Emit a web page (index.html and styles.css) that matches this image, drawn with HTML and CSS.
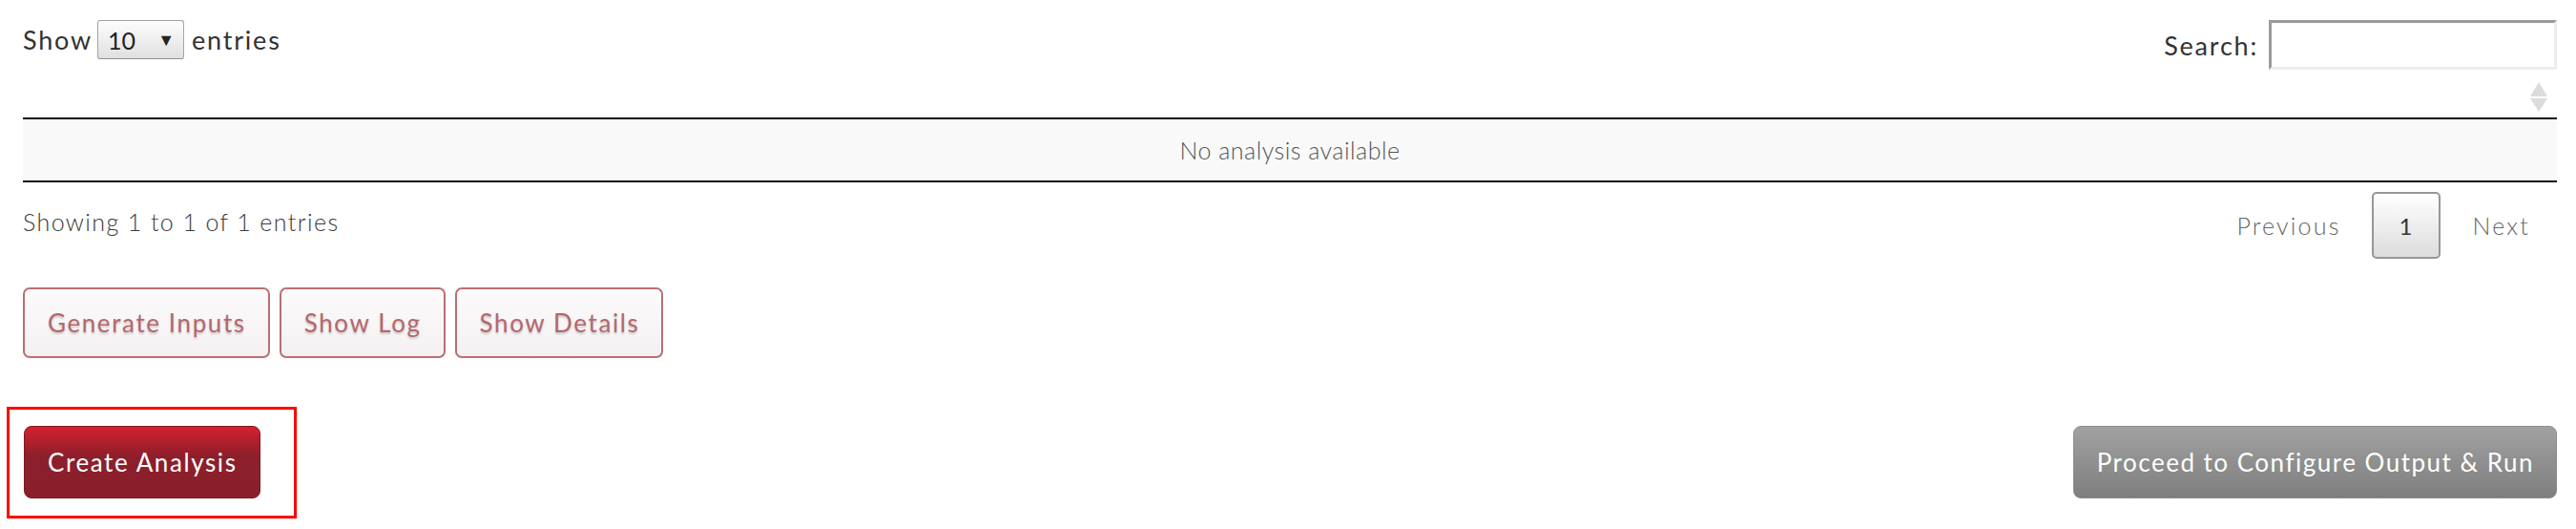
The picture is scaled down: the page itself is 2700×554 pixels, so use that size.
FILE: index.html
```html
<!DOCTYPE html>
<html lang="en">
<head>
<meta charset="utf-8">
<title>Analysis</title>
<link rel="stylesheet" href="styles.css">
</head>
<body>
<div class="page">
  <div class="dt-top">
    <div class="length">
      <span class="lbl">Show</span>
      <div class="select"><span>10</span><span class="caret">▼</span></div>
      <span class="lbl">entries</span>
    </div>
    <div class="filter">
      <span class="lbl">Search:</span>
      <input class="search" type="search" aria-label="Search">
    </div>
  </div>

  <table class="dt">
    <thead>
      <tr><th><div class="th-inner"><svg class="sort" width="18" height="31" viewBox="0 0 18 31"><path d="M9 0 L18 15 L0 15 Z" fill="#dcdcdc"/><path d="M0 17 L18 17 L9 31 Z" fill="#dcdcdc"/></svg></div></th></tr>
    </thead>
    <tbody>
      <tr><td>No analysis available</td></tr>
    </tbody>
  </table>

  <div class="dt-bottom">
    <div class="info">Showing 1 to 1 of 1 entries</div>
    <div class="paginate">
      <a class="pg-link">Previous</a>
      <a class="pg-current">1</a>
      <a class="pg-link">Next</a>
    </div>
  </div>

  <div class="btn-row">
    <button class="btn-outline">Generate Inputs</button>
    <button class="btn-outline">Show Log</button>
    <button class="btn-outline">Show Details</button>
  </div>

  <div class="action-row">
    <div class="hl"><button class="btn-create">Create Analysis</button></div>
    <button class="btn-proceed">Proceed to Configure Output &amp; Run</button>
  </div>
</div>
</body>
</html>
```

FILE: styles.css
```css
* { box-sizing: border-box; }
html, body { margin: 0; background: #fff; }
body {
  font-family: "Lato", "Open Sans", sans-serif;
  font-size: 24px;
  font-weight: 300;
  color: #333;
  min-height: 554px;
}
.page { width: 2700px; padding: 0 20px 32px 24px; }

.dt-top {
  display: flex;
  justify-content: space-between;
  align-items: flex-start;
  height: 77px;
  padding-top: 21px;
}
.lbl { letter-spacing: 1.8px; }
.length {
  display: flex;
  align-items: center;
  height: 41px;
  font-size: 27px;
  font-weight: 400;
  color: #333;
}
.select {
  display: flex;
  align-items: center;
  justify-content: space-between;
  width: 91px;
  height: 41px;
  margin: 0 8px 0 5px;
  padding: 0 9px 0 10px;
  border: 1px solid #a4a4a4;
  border-bottom-color: #8e8e8e;
  border-radius: 3px;
  background: linear-gradient(#fdfdfd, #e0e0e0);
  font-size: 25px;
  font-weight: 400;
  color: #222;
}
.caret { font-size: 18px; color: #222; }
.filter {
  display: flex;
  align-items: center;
  height: 52px;
  font-size: 27px;
  font-weight: 400;
  color: #333;
}
.search {
  width: 302px;
  height: 52px;
  margin: 0 0 0 11px;
  border-style: solid;
  border-width: 3px;
  border-color: #9a9a9a #ededed #ededed #9a9a9a;
  background: #fff;
  outline: none;
}

.dt { width: 100%; border-collapse: separate; border-spacing: 0; }
.dt th { padding: 0; border-bottom: 2px solid #111; }
.th-inner {
  height: 46px;
  display: flex;
  justify-content: flex-end;
  align-items: center;
  padding: 3px 10px 0 0;
}
.dt td {
  height: 66px;
  padding: 0;
  background: #f9f9f9;
  border-bottom: 2px solid #111;
  text-align: center;
  color: #555;
  font-size: 25px;
  letter-spacing: 0.5px;
}

.dt-bottom {
  display: flex;
  justify-content: space-between;
  align-items: center;
  height: 70px;
  margin-top: 10px;
}
.info {
  padding-bottom: 8px;
  color: #3a3a3a;
  font-size: 25px;
  font-weight: 300;
  letter-spacing: 1.4px;
}
.paginate { display: flex; align-items: center; }
.pg-link { padding: 0 28px 0 30px; color: #666; font-size: 25px; letter-spacing: 2.2px; }
.pg-current {
  display: flex;
  align-items: center;
  justify-content: center;
  width: 72px;
  height: 70px;
  margin: 0 4px;
  border: 2px solid #979797;
  border-radius: 5px;
  background: linear-gradient(#ffffff, #dcdcdc);
  color: #333;
  font-weight: 400;
}

.btn-row { display: flex; gap: 10px; margin-top: 30px; }
button { font-family: inherit; cursor: pointer; }
.btn-outline {
  height: 74px;
  padding: 0 23px 0 24px;
  border: 2px solid #b96f74;
  border-radius: 7px;
  background: linear-gradient(#fcfafb, #f5f1f2);
  color: #b5676c;
  font-size: 26px;
  font-weight: 400;
  letter-spacing: 1.6px;
  text-shadow: 0 2px 2px rgba(0, 0, 0, 0.18);
}

.action-row {
  display: flex;
  justify-content: space-between;
  align-items: flex-start;
  margin-top: 71px;
}
.hl { position: relative; margin-left: 1px; }
.hl::after {
  content: "";
  position: absolute;
  left: -18px;
  top: -20px;
  right: -38px;
  bottom: -21px;
  border: 3px solid #ff0000;
  pointer-events: none;
}
.btn-create {
  display: block;
  height: 76px;
  padding: 0 23px 0 24px;
  border: 1px solid #7d1823;
  border-radius: 8px;
  background: linear-gradient(#d3212f 0%, #b01f2c 22%, #8c1f2b 42%, #8a1f2b 100%);
  color: #fff;
  font-size: 26px;
  font-weight: 400;
  letter-spacing: 1.6px;
}
.btn-proceed {
  height: 76px;
  padding: 0 23px 0 24px;
  border: 1px solid #8c8c8c;
  border-radius: 8px;
  background: linear-gradient(#a0a1a0, #7d7e7d);
  color: #fff;
  font-size: 26px;
  font-weight: 400;
  letter-spacing: 1.5px;
}
```
